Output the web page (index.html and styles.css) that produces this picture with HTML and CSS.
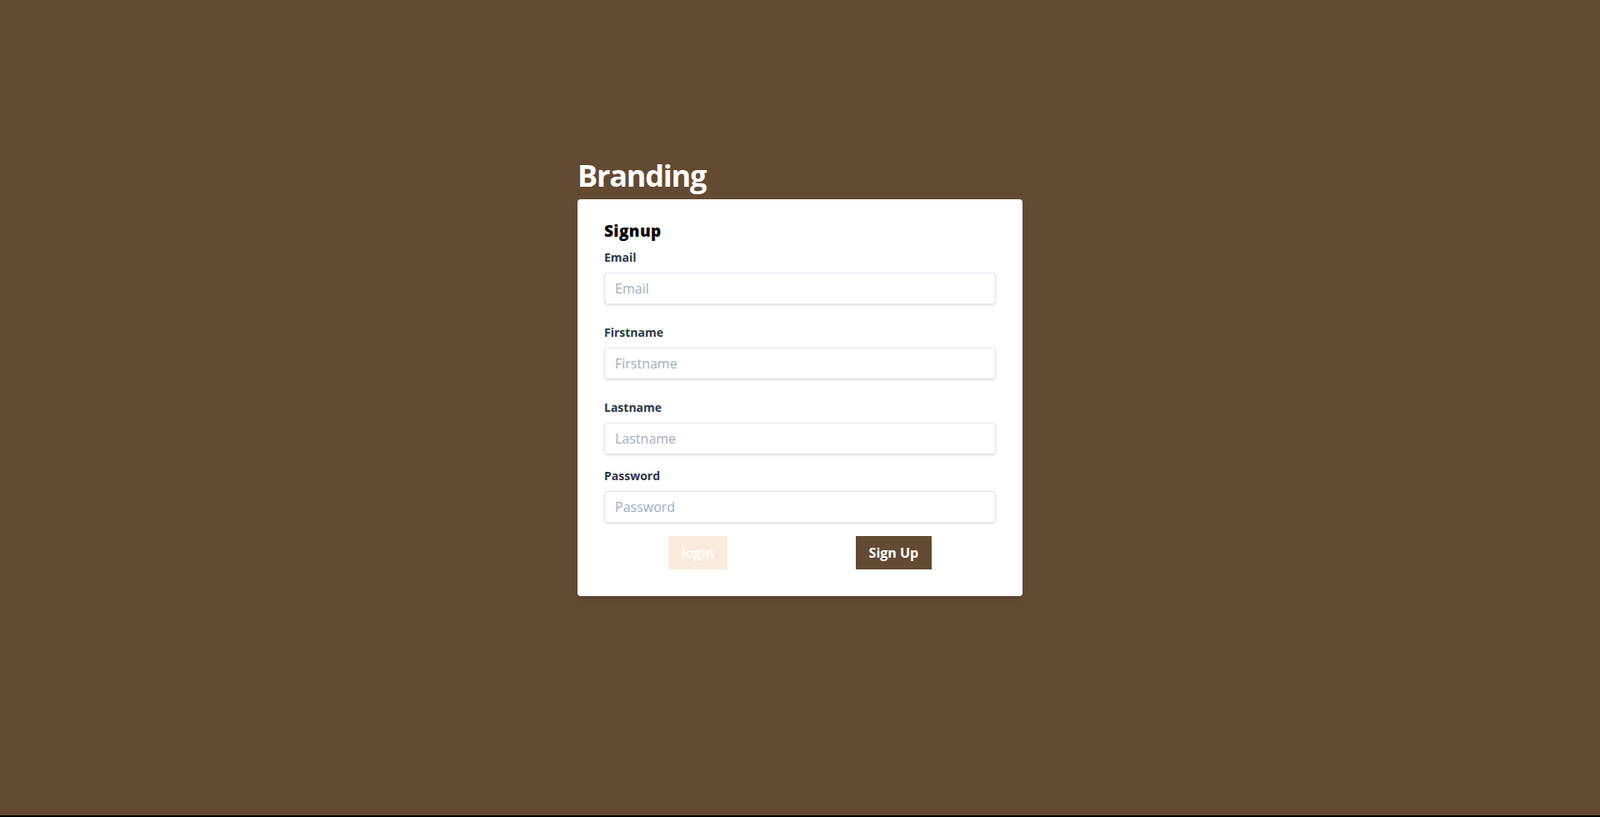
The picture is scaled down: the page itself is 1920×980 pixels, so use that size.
FILE: index.html
```html
<!DOCTYPE html>
<html lang="en">
<head>
<meta charset="utf-8">
<title>Signup</title>
<link rel="stylesheet" href="styles.css">
</head>
<body>
<div class="page">
  <div class="wrap">
    <h1 class="brand">Branding</h1>
    <form class="card">
      <h2 class="title">Signup</h2>
      <div class="field">
        <label class="label" for="email">Email</label>
        <input class="input" id="email" type="text" placeholder="Email">
      </div>
      <div class="field">
        <label class="label" for="firstname">Firstname</label>
        <input class="input" id="firstname" type="text" placeholder="Firstname">
      </div>
      <div class="field field-tight">
        <label class="label" for="lastname">Lastname</label>
        <input class="input" id="lastname" type="text" placeholder="Lastname">
      </div>
      <div class="field field-tight">
        <label class="label" for="password">Password</label>
        <input class="input" id="password" type="password" placeholder="Password">
      </div>
      <div class="actions">
        <button class="btn btn-login" type="button">login</button>
        <button class="btn btn-signup" type="button">Sign Up</button>
      </div>
    </form>
  </div>
</div>
</body>
</html>
```

FILE: styles.css
```css
html, body {
  margin: 0;
  padding: 0;
  background: #000;
}

.page {
  height: 978px;
  box-sizing: border-box;
  padding-top: 190px;
  background: #634a33;
  font-family: "Open Sans", "Noto Sans", sans-serif;
}

.wrap {
  width: 534px;
  margin: 0 auto;
}

.brand {
  margin: 0 0 8px;
  padding-top: 1px;
  font-size: 36px;
  line-height: 40px;
  font-weight: 700;
  color: #fff;
  letter-spacing: -1.2px;
}

.card {
  background: #fff;
  border-radius: 4px;
  padding: 24px 32px 32px;
  box-shadow: 0 4px 6px -1px rgba(0, 0, 0, 0.1), 0 2px 4px -1px rgba(0, 0, 0, 0.06);
}

.title {
  margin: 0 0 8px;
  font-size: 19px;
  line-height: 28px;
  font-weight: 800;
  color: #000;
  letter-spacing: 0.4px;
}

.field {
  margin-bottom: 24px;
}

.field-tight {
  margin-bottom: 16px;
}

.label {
  display: block;
  margin-bottom: 8px;
  font-size: 14px;
  line-height: 20px;
  font-weight: 700;
  color: #2d3748;
}

.input {
  display: block;
  width: 100%;
  height: 38px;
  box-sizing: border-box;
  margin: 0;
  padding: 8px 12px;
  border: 1px solid #e2e8f0;
  border-radius: 4px;
  font-family: inherit;
  font-size: 16px;
  line-height: 20px;
  color: #4a5568;
  background: #fff;
  box-shadow: 0 1px 3px rgba(0, 0, 0, 0.1), 0 1px 2px rgba(0, 0, 0, 0.06);
  outline: none;
}

.input::placeholder {
  color: #a0aec0;
}

.actions {
  display: flex;
  justify-content: space-around;
  align-items: center;
}

.btn {
  margin: 0;
  padding: 8px 16px;
  border: 0;
  border-radius: 0;
  font-family: inherit;
  font-size: 16px;
  line-height: 24px;
  font-weight: 700;
  color: #fff;
  cursor: pointer;
}

.btn-login {
  background: #fbebdc;
}

.btn-signup {
  background: #634a33;
}
```
